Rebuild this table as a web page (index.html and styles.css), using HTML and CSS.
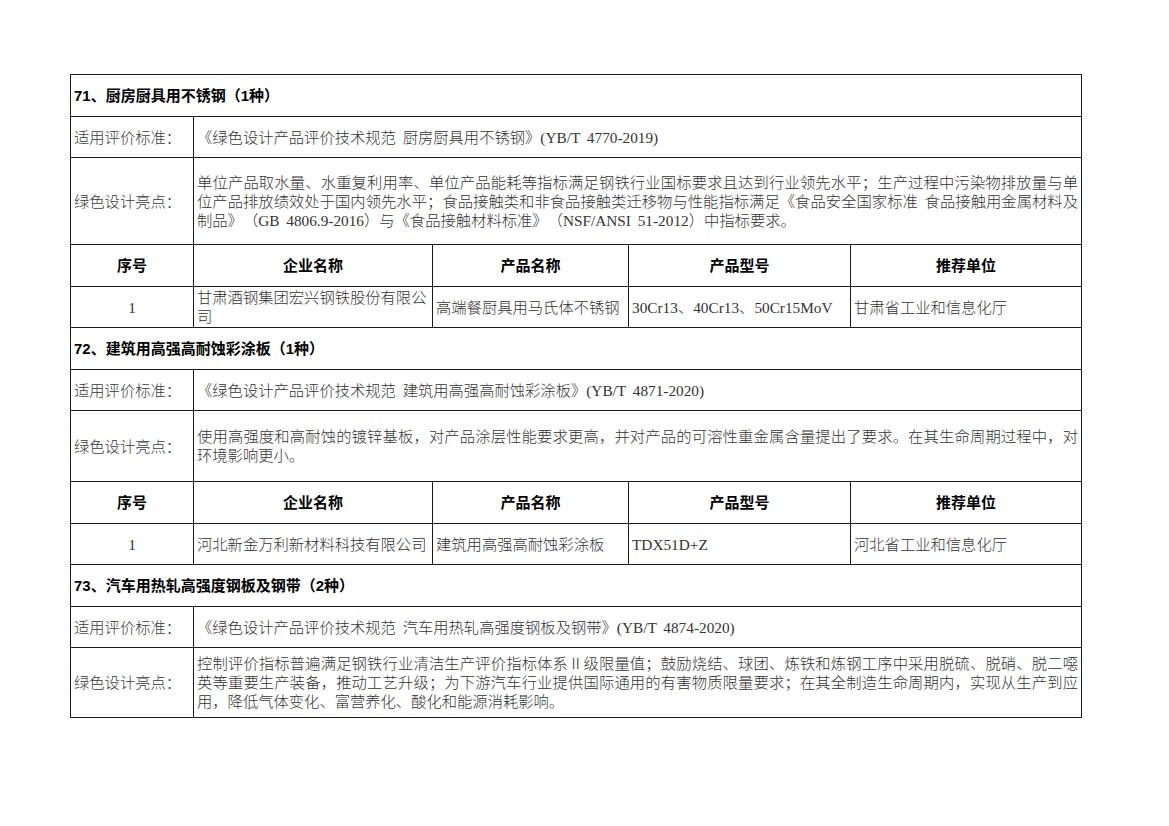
FILE: index.html
```html
<!DOCTYPE html>
<html lang="zh-CN">
<head>
<meta charset="utf-8">
<title>绿色设计产品</title>
<link rel="stylesheet" href="styles.css">
</head>
<body>
<table class="sheet">
  <colgroup>
    <col class="c1"><col class="c2"><col class="c3"><col class="c4"><col class="c5">
  </colgroup>
  <tbody>
    <tr class="r-title"><td colspan="5" class="title">71、厨房厨具用不锈钢（1种）</td></tr>
    <tr class="r-std"><td class="label">适用评价标准：</td><td colspan="4" class="text">《绿色设计产品评价技术规范 厨房厨具用不锈钢》(YB/T 4770-2019)</td></tr>
    <tr class="r-hl3"><td class="label">绿色设计亮点：</td><td colspan="4" class="text">
      <span class="jl">单位产品取水量、水重复利用率、单位产品能耗等指标满足钢铁行业国标要求且达到行业领先水平；生产过程中污染物排放量与单</span>
      <span class="jl">位产品排放绩效处于国内领先水平；食品接触类和非食品接触类迁移物与性能指标满足《食品安全国家标准 食品接触用金属材料及</span>
      <span class="ll">制品》（GB 4806.9-2016）与《食品接触材料标准》（NSF/ANSI 51-2012）中指标要求。</span>
    </td></tr>
    <tr class="r-head"><th>序号</th><th>企业名称</th><th>产品名称</th><th>产品型号</th><th>推荐单位</th></tr>
    <tr class="r-data"><td class="num">1</td><td class="text">甘肃酒钢集团宏兴钢铁股份有限公司</td><td class="text">高端餐厨具用马氏体不锈钢</td><td class="text">30Cr13、40Cr13、50Cr15MoV</td><td class="text">甘肃省工业和信息化厅</td></tr>

    <tr class="r-title"><td colspan="5" class="title">72、建筑用高强高耐蚀彩涂板（1种）</td></tr>
    <tr class="r-std"><td class="label">适用评价标准：</td><td colspan="4" class="text">《绿色设计产品评价技术规范 建筑用高强高耐蚀彩涂板》(YB/T 4871-2020)</td></tr>
    <tr class="r-hl2"><td class="label">绿色设计亮点：</td><td colspan="4" class="text">
      <span class="jl">使用高强度和高耐蚀的镀锌基板，对产品涂层性能要求更高，并对产品的可溶性重金属含量提出了要求。在其生命周期过程中，对</span>
      <span class="ll">环境影响更小。</span>
    </td></tr>
    <tr class="r-head"><th>序号</th><th>企业名称</th><th>产品名称</th><th>产品型号</th><th>推荐单位</th></tr>
    <tr class="r-data"><td class="num">1</td><td class="text">河北新金万利新材料科技有限公司</td><td class="text">建筑用高强高耐蚀彩涂板</td><td class="text">TDX51D+Z</td><td class="text">河北省工业和信息化厅</td></tr>

    <tr class="r-title"><td colspan="5" class="title">73、汽车用热轧高强度钢板及钢带（2种）</td></tr>
    <tr class="r-std"><td class="label">适用评价标准：</td><td colspan="4" class="text">《绿色设计产品评价技术规范 汽车用热轧高强度钢板及钢带》(YB/T 4874-2020)</td></tr>
    <tr class="r-hl3b"><td class="label">绿色设计亮点：</td><td colspan="4" class="text">
      <span class="jl">控制评价指标普遍满足钢铁行业清洁生产评价指标体系Ⅱ级限量值；鼓励烧结、球团、炼铁和炼钢工序中采用脱硫、脱硝、脱二噁</span>
      <span class="jl">英等重要生产装备，推动工艺升级；为下游汽车行业提供国际通用的有害物质限量要求；在其全制造生命周期内，实现从生产到应</span>
      <span class="ll">用，降低气体变化、富营养化、酸化和能源消耗影响。</span>
    </td></tr>
  </tbody>
</table>
</body>
</html>
```

FILE: styles.css
```css
html, body {
  margin: 0;
  padding: 0;
  background: #ffffff;
}

body {
  padding: 74px 0 0 70px;
  font-family: "Liberation Serif", "Noto Sans CJK SC", serif;
  font-size: 15.3px;
  font-weight: 300;
  color: #333333;
  text-spacing-trim: space-all;
  word-spacing: 3px;
}

.sheet {
  border-collapse: collapse;
  table-layout: fixed;
  width: 1011px;
}

.c1 { width: 123px; }
.c2 { width: 239px; }
.c3 { width: 196px; }
.c4 { width: 222px; }
.c5 { width: 231px; }

.sheet td,
.sheet th {
  border: 1px solid #1a1a1a;
  vertical-align: middle;
  padding: 0 3px;
  line-height: 19px;
  overflow: hidden;
}

.r-title { height: 42px; }
.r-std { height: 41px; }
.r-hl3 { height: 87px; }
.r-hl2 { height: 71px; }
.r-hl3b { height: 70px; }
.r-head { height: 42px; }
.r-data { height: 41px; }

.title {
  font-family: "Liberation Sans", "Noto Sans CJK SC", sans-serif;
  font-weight: bold;
  font-size: 15px;
  color: #000;
  padding-left: 2px;
  word-spacing: 0;
}

.label {
  text-align: left;
  color: #3a3a3a;
}

.text {
  text-align: left;
  word-break: break-all;
}

.jl {
  display: block;
  text-align: justify;
  text-align-last: justify;
  white-space: nowrap;
}

.ll {
  display: block;
  text-align: left;
}

.sheet th {
  font-family: "Liberation Sans", "Noto Sans CJK SC", sans-serif;
  font-weight: bold;
  font-size: 15px;
  color: #000;
  text-align: center;
}

.num {
  text-align: center;
}
```
